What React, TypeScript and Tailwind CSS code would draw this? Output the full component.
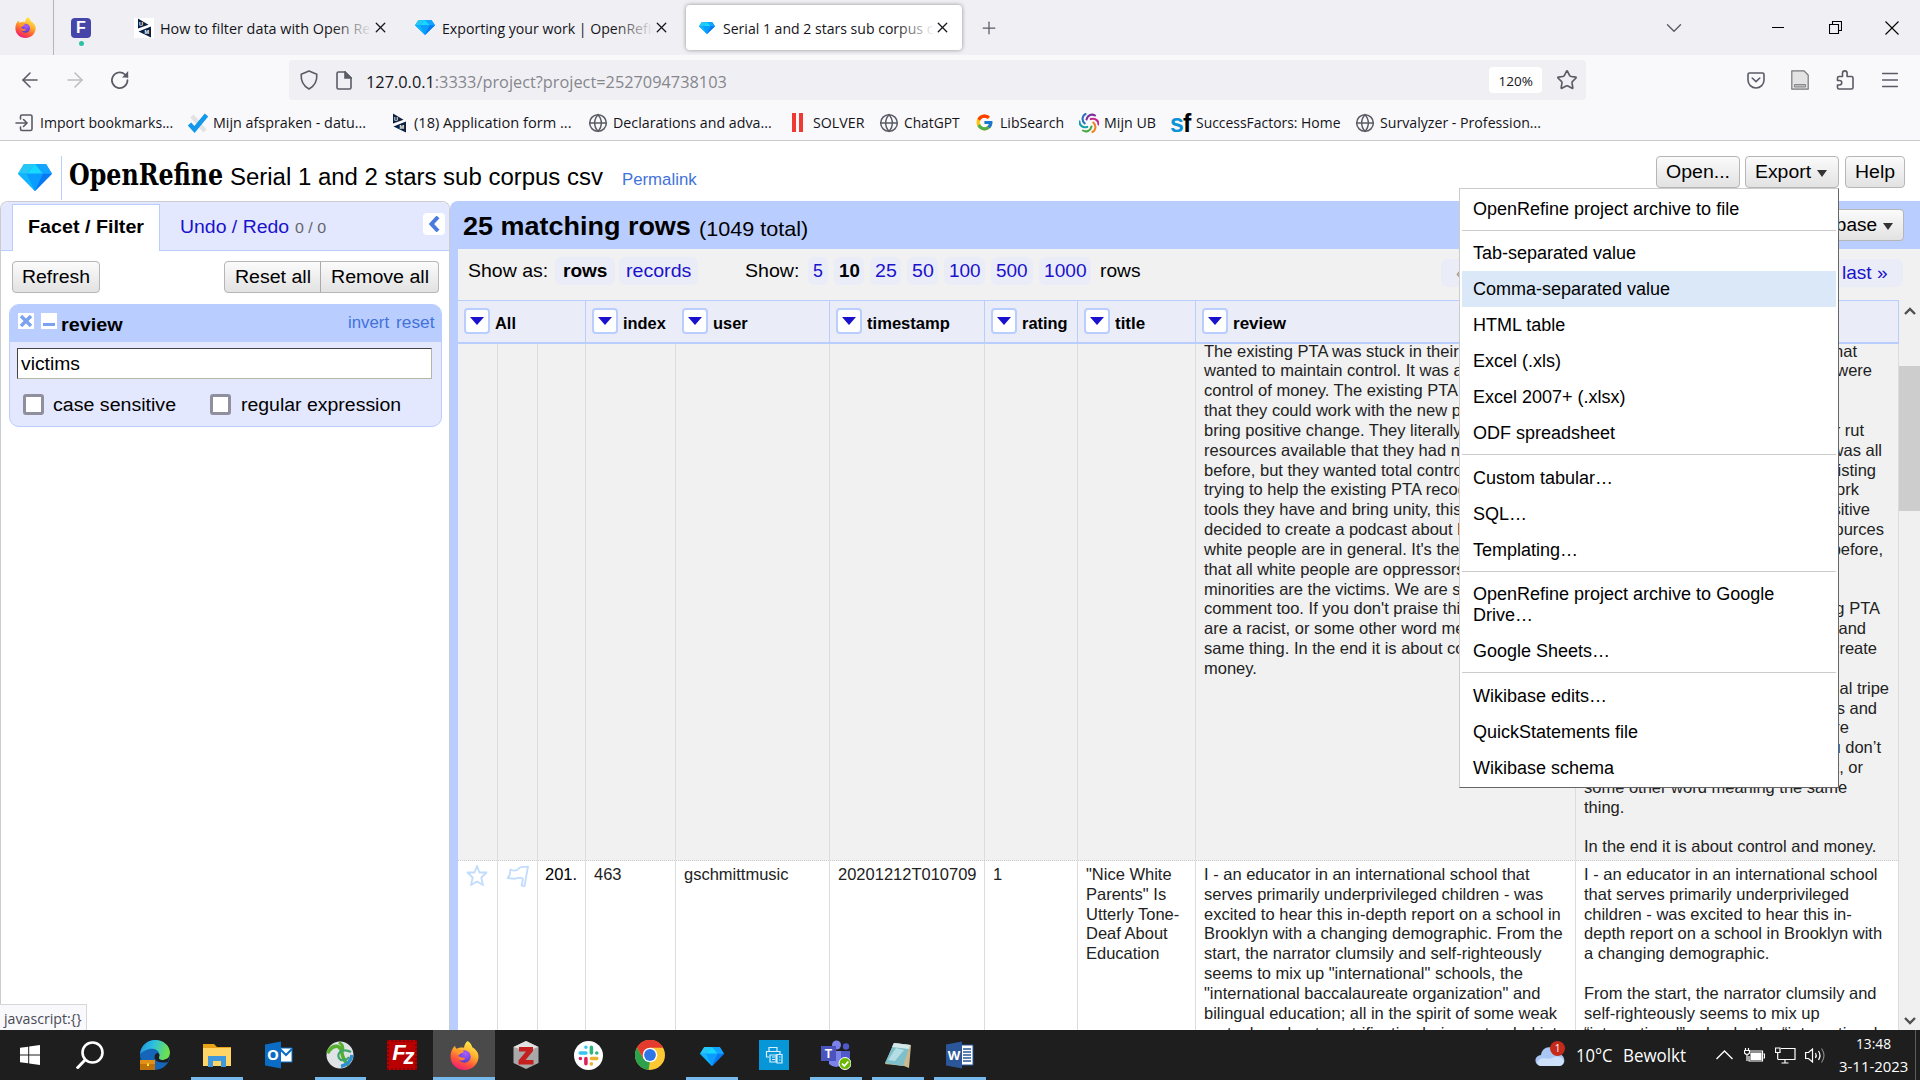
import React, { useLayoutEffect, useRef, useState } from "react";
import { Globe, Star, ArrowLeft, ArrowRight, X, Plus, ChevronDown, Menu as MenuIcon } from "lucide-react";
import { FcGoogle } from "react-icons/fc";

/* Single-line label condensed or widened horizontally to an exact width. */
function Fit({ w, className = "", children }: { w: number; className?: string; children: React.ReactNode }) {
  const ref = useRef<HTMLSpanElement>(null);
  const [scale, setScale] = useState(1);
  useLayoutEffect(() => {
    if (ref.current) setScale(w / ref.current.offsetWidth);
  }, [w]);
  return (
    <span className={"inline-block shrink-0 whitespace-nowrap " + className} style={{ width: w }}>
      <span ref={ref} className="inline-block origin-left" style={{ transform: `scaleX(${scale})` }}>
        {children}
      </span>
    </span>
  );
}

/* ---------- logos ---------- */

function Diamond({ className }: { className: string }) {
  return (
    <svg viewBox="0 0 34 28" preserveAspectRatio="none" className={className}>
      <path d="M6 0H28L34 10L17 28L0 10Z" fill="#0a95ff" />
      <path d="M6 0H17L9 10H0Z" fill="#26c6f5" />
      <path d="M17 0H28L34 10H25Z" fill="#12a4ff" />
      <path d="M17 0L25 10H9Z" fill="#17d9ff" />
      <path d="M0 10H9L17 28Z" fill="#10b5fb" />
      <path d="M9 10H25L17 28Z" fill="#0a9cff" />
      <path d="M25 10H34L17 28Z" fill="#0878f4" />
    </svg>
  );
}

function Firefox({ className }: { className: string }) {
  return (
    <svg viewBox="0 0 28 28" className={className}>
      <defs>
        <linearGradient id="ffOuter" x1="0.75" y1="0" x2="0.3" y2="1">
          <stop offset="0" stopColor="#fff14f" />
          <stop offset="0.4" stopColor="#ffb02e" />
          <stop offset="0.7" stopColor="#ff5a36" />
          <stop offset="1" stopColor="#f0187a" />
        </linearGradient>
        <radialGradient id="ffCore" cx="0.6" cy="0.25" r="0.8">
          <stop offset="0" stopColor="#b05cff" />
          <stop offset="1" stopColor="#4a3bd0" />
        </radialGradient>
      </defs>
      <path d="M17 0C20 2 21 4 21.500 6C25 8 28 11.500 27.500 16C27 23 21 28 14 28C6.500 28 0.500 22.500 0.500 15C0.500 10 2.500 6.500 5 4.500C5 6 5.500 7 6.500 7.500C9 6 12 6.200 13.500 6.500C13.800 4 15 1.500 17 0Z" fill="url(#ffOuter)" />
      <circle cx="14" cy="15" r="6" fill="url(#ffCore)" />
      <path d="M6 8C9 7.500 12 8.500 13.500 10.500C11.500 11.500 9.500 12 9 13.500C7.500 13 6 10.500 6 8Z" fill="#ff9a2b" />
      <path d="M8 14C10 16.500 13 15.500 15 17C13.500 19 10.500 19.500 8.300 17.500Z" fill="#ff7a35" />
    </svg>
  );
}

function UmLogo({ boxed = false }: { boxed?: boolean }) {
  return (
    <svg viewBox="0 0 20 20" className={boxed ? "size-5 bg-white" : "size-5"}>
      <path d="M4 0.500L14.500 6.800L4 10.500Z" fill="#0b1f41" />
      <path d="M17 8.500V19.500L4.500 13.500Z" fill="#0b1f41" />
      <text x="5" y="8" fontSize="5.500" fontWeight="700" fill="#fff" fontFamily="Liberation Sans, sans-serif">U</text>
      <text x="10.500" y="16" fontSize="5.500" fontWeight="700" fill="#fff" fontFamily="Liberation Sans, sans-serif">M</text>
    </svg>
  );
}

function CheckLogo() {
  return (
    <svg viewBox="0 0 20 20" className="size-5">
      <path d="M4 3L17 18" stroke="#e3e3e6" strokeWidth="4.500" />
      <path d="M1.500 11L6.500 16.500L18.500 2" fill="none" stroke="#1499ea" strokeWidth="4.600" />
    </svg>
  );
}

function ImportIcon() {
  return (
    <svg viewBox="0 0 20 20" fill="none" stroke="#5b5b66" strokeWidth="1.600" strokeLinecap="round" className="size-5">
      <path d="M5.500 6V3.500C5.500 2.500 6.200 2 7 2H15.500C16.500 2 17 2.600 17 3.500V16C17 17 16.500 17.500 15.500 17.500H7C6 17.500 5.500 17 5.500 16V14" />
      <path d="M1 10H12M8.500 6.500L12 10L8.500 13.500" />
    </svg>
  );
}

function Swirl() {
  const colors = ["#7a2f9b", "#c22a8e", "#f08122", "#49a942", "#12a0a8", "#2c6fc0"];
  return (
    <svg viewBox="-10 -10 20 20" className="size-5" fill="none" strokeWidth="2.100" strokeLinecap="round">
      {colors.map((c, i) => (
        <path key={c} d="M-2.500 -3.500C-1.500 -8 3 -9.500 6 -7.500" stroke={c} transform={`rotate(${i * 60})`} />
      ))}
    </svg>
  );
}

/* ---------- browser chrome ---------- */

function TabTitle({ children, w, active = false }: { children: React.ReactNode; w: number; active?: boolean }) {
  return (
    <div className="relative w-[212px] shrink-0 overflow-hidden text-[15px] leading-5 text-[#15141a]">
      <Fit w={w}>{children}</Fit>
      <div className={active ? "absolute inset-y-0 right-0 w-10 bg-linear-to-r from-transparent to-white" : "absolute inset-y-0 right-0 w-10 bg-linear-to-r from-transparent to-[#f0f0f4]"} />
    </div>
  );
}

function TabStrip() {
  return (
    <div className="flex h-[55px] items-center bg-[#f0f0f4]">
      <div className="flex h-full w-[54px] items-center border-r border-[#b4b4ba] pl-[15px]">
        <Firefox className="size-[21px]" />
      </div>
      <div className="ml-[17px] flex h-full w-5 flex-col items-center pt-[18px]">
        <div className="flex size-5 items-center justify-center rounded bg-[#4646a8] font-['Liberation_Sans',sans-serif] text-[16px] font-bold text-white">F</div>
        <div className="mt-[3px] size-[5px] rounded-full bg-[#2ac3a2]" />
      </div>
      <div className="ml-[43px] flex items-center">
        <UmLogo boxed />
        <div className="ml-[6px]"><TabTitle w={236}>How to filter data with Open Refine</TabTitle></div>
        <X className="size-[17px] text-[#15141a]" strokeWidth={1.8} />
      </div>
      <div className="ml-[26px] flex items-center">
        <Diamond className="h-[15px] w-5" />
        <div className="ml-[7px]"><TabTitle w={226}>Exporting your work | OpenRefine</TabTitle></div>
        <X className="-ml-px size-[17px] text-[#15141a]" strokeWidth={1.8} />
      </div>
      <div className="ml-[16px] flex h-[45px] w-[276px] items-center rounded bg-white pl-[13px] shadow-[0_0_4px_rgba(0,0,0,0.4)]">
        <Diamond className="h-3 w-4" />
        <div className="ml-[8px]"><TabTitle active w={224}>Serial 1 and 2 stars sub corpus csv</TabTitle></div>
        <X className="-ml-px size-[17px] text-[#15141a]" strokeWidth={1.8} />
      </div>
      <Plus className="ml-[17px] size-5 text-[#5b5b66]" strokeWidth={1.5} />
      <div className="ml-auto flex items-center">
        <ChevronDown className="size-[26px] text-[#5b5b66]" strokeWidth={1.3} />
        <div className="ml-[85px] h-px w-3 bg-black" />
        <svg viewBox="0 0 13 13" className="ml-[45px] size-[13px]" fill="none" stroke="#000" strokeWidth="1.100">
          <path d="M0.500 3.500H9.500V12.500H0.500ZM3.500 3.500V0.500H12.500V9.500H9.500" />
        </svg>
        <svg viewBox="0 0 14 14" className="ml-[43px] mr-[21px] size-[14px]" stroke="#000" strokeWidth="1.100">
          <path d="M0.500 0.500L13.500 13.500M13.500 0.500L0.500 13.500" />
        </svg>
      </div>
    </div>
  );
}

function Toolbar() {
  return (
    <div className="flex h-[50px] items-center bg-[#f9f9fb] text-[#5b5b66]">
      <ArrowLeft className="ml-[18px] size-6" strokeWidth={1.6} />
      <ArrowRight className="ml-[21px] size-6 text-[#bdbdc2]" strokeWidth={1.6} />
      <svg viewBox="0 0 20 20" className="ml-[23px] size-5" fill="none" stroke="#5b5b66" strokeWidth="1.700" strokeLinecap="round">
        <path d="M17.500 10A7.800 7.800 0 1 1 15 4.500L17.500 7" />
        <path d="M18.200 1V7.500H12Z" fill="#5b5b66" stroke="none" />
      </svg>
      <div className="ml-[159px] flex h-10 w-[1297px] items-center rounded bg-[#f0f0f4]">
        <svg viewBox="0 0 20 20" className="ml-[10px] size-5" fill="none" stroke="#5b5b66" strokeWidth="1.600">
          <path d="M10 1L17.800 4.200C18.200 10.500 15.500 16 10 19C4.500 16 1.800 10.500 2.200 4.200Z" strokeLinejoin="round" />
        </svg>
        <svg viewBox="0 0 16 19" className="ml-[17px] h-[19px] w-4" fill="none" stroke="#5b5b66" strokeWidth="1.600">
          <path d="M2.500 1H9L15 7V16.500Q15 18 13.500 18H2.500Q1 18 1 16.500V2.500Q1 1 2.500 1Z" />
          <path d="M9 1L15 7H9Z" fill="#5b5b66" />
        </svg>
        <span className="ml-[14px] pt-[3px] text-[16px] text-[#86868d]">
          <Fit w={361}><span className="text-[#15141a]">127.0.0.1</span>:3333/project?project=2527094738103</Fit>
        </span>
        <div className="ml-auto flex h-[26px] w-[53px] items-center justify-center rounded bg-white pt-0.5 text-[13.5px] text-[#15141a]"><Fit w={34}>120%</Fit></div>
        <Star className="ml-[14px] mr-2 size-[22px]" strokeWidth={1.8} />
      </div>
      <svg viewBox="0 0 18 17" className="ml-auto h-[17px] w-[18px]" fill="none" stroke="#5b5b66" strokeWidth="1.600" strokeLinecap="round">
        <path d="M2.500 1H15.500Q17 1 17 2.500V8C17 12.500 13.500 16 9 16C4.500 16 1 12.500 1 8V2.500Q1 1 2.500 1ZM5.200 6L9 9.600L12.800 6" />
      </svg>
      <svg viewBox="0 0 18 20" className="ml-[26px] h-5 w-[18px]" fill="#e3e3e3" stroke="#77777c" strokeWidth="1.200">
        <path d="M0.800 0.800H13L17.200 5V19.200H0.800Z" />
        <path d="M3.500 14.500H14.500V17H3.500Z" fill="#bbb" strokeWidth="0.800" />
      </svg>
      <svg viewBox="0 0 18 20" className="ml-[27px] h-5 w-[18px]" fill="none" stroke="#5b5b66" strokeWidth="1.600" strokeLinejoin="round">
        <path d="M6.500 6.500V3.200A2.300 2.300 0 0 1 11.100 3.200V6.500H15.500Q17 6.500 17 8V17.500Q17 19 15.500 19H3Q1.500 19 1.500 17.500V15H3.500A2.200 2.200 0 0 0 3.500 10.500H1.500V8Q1.500 6.500 3 6.500Z" />
      </svg>
      <MenuIcon className="ml-[25px] mr-[19px] size-[22px]" strokeWidth={1.7} />
    </div>
  );
}

const globe = <Globe className="size-5 text-[#5b5b66]" strokeWidth={1.8} />;

function Bookmark({ cls, icon, w, children }: { cls: string; icon: React.ReactNode; w: number; children: React.ReactNode }) {
  return (
    <div className={"flex shrink-0 items-center " + cls}>
      <span className="flex w-[25px] shrink-0">{icon}</span>
      <span className="pt-px"><Fit w={w}>{children}</Fit></span>
    </div>
  );
}

function Bookmarks() {
  return (
    <div className="flex h-9 items-center border-b border-[#cccccc] bg-[#f9f9fb] pl-[15px] text-[14.5px] leading-5 text-[#15141a]">
      <Bookmark cls="w-[173px]" icon={<ImportIcon />} w={133}>Import bookmarks...</Bookmark>
      <Bookmark cls="w-[201px]" icon={<CheckLogo />} w={153}>Mijn afspraken - datu...</Bookmark>
      <Bookmark cls="w-[199px]" icon={<UmLogo />} w={158}>(18) Application form ...</Bookmark>
      <Bookmark cls="w-[200px]" icon={globe} w={159}>Declarations and adva...</Bookmark>
      <Bookmark cls="w-[91px]" icon={<span className="flex gap-[3px] pl-1"><i className="h-[19px] w-1 bg-[#ee3a32]" /><i className="h-[19px] w-1 bg-[#ee3a32]" /></span>} w={51}>SOLVER</Bookmark>
      <Bookmark cls="w-[96px]" icon={globe} w={56}>ChatGPT</Bookmark>
      <Bookmark cls="w-[104px]" icon={<FcGoogle className="size-[19px]" />} w={64}>LibSearch</Bookmark>
      <Bookmark cls="w-[92px]" icon={<Swirl />} w={52}>Mijn UB</Bookmark>
      <Bookmark cls="w-[184px]" icon={<span className="-ml-px flex h-5 items-center font-['Liberation_Sans',sans-serif] text-[25px] font-bold leading-5 tracking-[-1px]"><span className="text-[#0a93d6]">s</span><span className="text-black">f</span></span>} w={144}>SuccessFactors: Home</Bookmark>
      <Bookmark cls="w-[190px]" icon={globe} w={161}>Survalyzer - Profession...</Bookmark>
    </div>
  );
}

/* ---------- OpenRefine ---------- */

const btn = "flex h-8 items-center border border-[#b6b6b6] bg-linear-to-b from-[#fbfbfb] to-[#e2e2e2] text-[18px] text-black";

function Caret({ cls }: { cls: string }) {
  return <span className={"mt-0.5 block size-0 border-x-[5.5px] border-t-[7px] border-x-transparent border-t-[#333] " + cls} />;
}

const menuGroups: string[][] = [
  ["OpenRefine project archive to file"],
  ["Tab-separated value", "Comma-separated value", "HTML table", "Excel (.xls)", "Excel 2007+ (.xlsx)", "ODF spreadsheet"],
  ["Custom tabular…", "SQL…", "Templating…"],
  ["OpenRefine project archive to Google Drive…", "Google Sheets…"],
  ["Wikibase edits…", "QuickStatements file", "Wikibase schema"],
];

function ExportMenu() {
  return (
    <div className="absolute right-[-1px] top-[31px] z-20 h-[600px] w-[380px] border border-b-[#666] border-l-[#ccc] border-r-[#666] border-t-[#ccc] bg-white p-0.5 text-[18px] leading-[21px] text-black">
      {menuGroups.map((group, g) => (
        <React.Fragment key={g}>
          {g > 0 && <div className={g > 1 ? "mb-[4.6px] mt-[3px] h-px bg-[#ccc]" : "mb-1 mt-[3px] h-px bg-[#ccc]"} />}
          {group.map((item) => (
            <div key={item} className={item === "Comma-separated value" ? "bg-[#dbe8f8] px-[11px] pb-[7px] pt-[8px]" : "px-[11px] pb-[7px] pt-[8px]"}>
              {item}
            </div>
          ))}
        </React.Fragment>
      ))}
    </div>
  );
}

function AppHeader() {
  return (
    <div className="flex h-[60px] items-start bg-white">
      <Diamond className="ml-[18px] mt-[23px] h-[27px] w-[34px]" />
      <div className="ml-[9px] mt-[15px] h-11 w-px bg-[#bacdff]" />
      <span className="ml-[7px] mt-[14px] font-['DejaVu_Serif',serif] text-[29px] font-bold leading-[40px] text-black"><Fit w={154}>OpenRefine</Fit></span>
      <span className="ml-[7px] mt-[16px] text-[23px] leading-[40px] text-black"><Fit w={373}>Serial 1 and 2 stars sub corpus csv</Fit></span>
      <span className="ml-[19px] mt-[19px] text-[16.8px] leading-[40px] text-[#4272db]"><Fit w={75}>Permalink</Fit></span>
      <div className="ml-auto mr-[15px] mt-[15px] flex">
        <div className={btn + " w-[84px] justify-center rounded"}><Fit w={64}>Open...</Fit></div>
        <div className={btn + " relative ml-[5px] w-[94px] rounded pl-[9px]"}>
          <Fit w={56}>Export</Fit>
          <Caret cls="ml-[6px]" />
          <ExportMenu />
        </div>
        <div className={btn + " ml-[6px] w-[60px] justify-center rounded"}><Fit w={40}>Help</Fit></div>
      </div>
    </div>
  );
}

function LeftPanel() {
  return (
    <div className="relative h-full w-[450px] shrink-0 rounded-t-lg border-l border-r border-t border-[#cbcbd2] bg-white">
      <div className="flex h-[49px] rounded-t-lg border-b border-[#bacdff] bg-[#e3e8ff]">
        <div className="ml-[11px] mt-0.5 h-[47px] w-[148px] border border-b-0 border-[#bacdff] bg-white pl-[15px] text-[18px] font-bold leading-[45px] text-black"><Fit w={116}>Facet / Filter</Fit></div>
        <div className="ml-[20px] mt-0.5 leading-[46px]">
          <span className="text-[18px] text-[#1a12cc]"><Fit w={109}>Undo / Redo</Fit></span>
          <span className="ml-[6px] text-[15.5px] text-[#666]"><Fit w={31}>0 / 0</Fit></span>
        </div>
        <div className="ml-auto mr-1 mt-[11px] flex h-[22px] w-[22px] items-center justify-center rounded bg-white">
          <svg viewBox="0 0 12 16" className="h-4 w-3" fill="none" stroke="#4a7ae0" strokeWidth="4"><path d="M10 1L3.500 8L10 15" /></svg>
        </div>
      </div>
      <div className="mt-[10px] flex px-[11px]">
        <div className={btn + " w-[88px] justify-center rounded"}><Fit w={68}>Refresh</Fit></div>
        <div className={btn + " ml-auto w-[97px] justify-center rounded-l"}><Fit w={76}>Reset all</Fit></div>
        <div className={btn + " -ml-px mr-[-1px] w-[119px] justify-center rounded-r border-l-[#aaa]"}><Fit w={98}>Remove all</Fit></div>
      </div>
      <div className="ml-2 mt-[11px] h-[123px] w-[433px] rounded-[10px] border border-[#bacdff] bg-[#e3e8ff]">
        <div className="flex h-[37px] items-start rounded-t-[8px] bg-[#bacdff] pl-2 pr-[7px]">
          <div className="mt-[8px] flex size-4 items-center justify-center bg-white">
            <svg viewBox="0 0 12 12" className="size-3" stroke="#7aa2ee" strokeWidth="3.400"><path d="M1 1L11 11M11 1L1 11" /></svg>
          </div>
          <div className="ml-[7px] mt-[8px] flex size-4 items-end bg-white px-0.5 pb-[3px]"><div className="h-[3px] w-full bg-[#7aa2ee]" /></div>
          <span className="ml-[4px] text-[18.5px] font-bold leading-[39px] text-black"><Fit w={62}>review</Fit></span>
          <span className="ml-auto text-[16.4px] leading-[35px] text-[#4272db]"><Fit w={41}>invert</Fit></span>
          <span className="ml-[7px] text-[16.4px] leading-[35px] text-[#4272db]"><Fit w={38}>reset</Fit></span>
        </div>
        <div className="ml-[7px] mt-[6px] h-[31px] w-[415px] border border-b-[#b5b5a8] border-l-[#444] border-r-[#b5b5a8] border-t-[#444] bg-white pl-[3px] text-[18px] leading-[30px] text-black"><Fit w={59}>victims</Fit></div>
        <div className="mt-[14px] flex items-center text-[18px] leading-[21px] text-black">
          <i className="ml-[13px] size-[21px] rounded-[3px] border-3 border-[#8f8f9d] bg-white" />
          <span className="ml-[9px] pt-0.5"><Fit w={123}>case sensitive</Fit></span>
          <i className="ml-[34px] size-[21px] rounded-[3px] border-3 border-[#8f8f9d] bg-white" />
          <span className="ml-[10px] pt-0.5"><Fit w={160}>regular expression</Fit></span>
        </div>
      </div>
      <div className="absolute bottom-0 left-[-1px] h-[26px] w-[87px] border-r border-t border-[#d7d7db] bg-[#f9f9fb] pl-[4px] font-['Open_Sans',sans-serif] text-[14px] leading-[27px] text-[#4a4a55]"><Fit w={77}>javascript:{"{}"}</Fit></div>
    </div>
  );
}

function Pill({ cls, w, bold = false, children }: { cls: string; w: number; bold?: boolean; children: React.ReactNode }) {
  return (
    <span className={"flex h-7 shrink-0 items-center justify-center rounded-md bg-[#eaecf8] " + cls + (bold ? " font-bold text-black" : " text-[#1a12cc]")}>
      <Fit w={w}>{children}</Fit>
    </span>
  );
}

function ViewControls() {
  return (
    <div className="flex h-[51px] items-start bg-[#f1f1f1] pl-[10px] pt-2 text-[17.8px] leading-7 text-black">
      <Fit w={80}>Show as:</Fit>
      <Pill cls="ml-[7px] w-[60px]" w={45} bold>rows</Pill>
      <Pill cls="ml-[4px] w-[79px]" w={65}>records</Pill>
      <span className="ml-[47px]"><Fit w={54}>Show:</Fit></span>
      <Pill cls="ml-[9px] w-5" w={10}>5</Pill>
      <Pill cls="ml-[6px] w-[30px]" w={21} bold>10</Pill>
      <Pill cls="ml-[6px] w-[31px]" w={22}>25</Pill>
      <Pill cls="ml-[6px] w-[31px]" w={22}>50</Pill>
      <Pill cls="ml-[6px] w-[41px]" w={32}>100</Pill>
      <Pill cls="ml-[6px] w-[42px]" w={32}>500</Pill>
      <Pill cls="ml-[6px] w-[52px]" w={43}>1000</Pill>
      <span className="ml-[9px]"><Fit w={41}>rows</Fit></span>
      <span className="ml-auto mr-[17px] mt-0.5 flex h-7 w-[462px] items-center justify-between rounded-md bg-[#eaecf8] pl-[15px] pr-[15px]">
        <span className="text-[#999]">«</span>
        <span className="text-[#1a12cc]"><Fit w={46}>last »</Fit></span>
      </span>
    </div>
  );
}

function HeadCell({ cls, label, w }: { cls: string; label: string; w: number }) {
  return (
    <div className={"flex shrink-0 items-start pt-[7px] " + cls}>
      <span className="flex h-[26px] w-[26px] shrink-0 items-center justify-center rounded border-2 border-[#bacdff] bg-white">
        <span className="size-0 border-x-[7px] border-t-[8px] border-x-transparent border-t-[#1a12cc]" />
      </span>
      <span className="ml-[5px] mt-0.5 text-[16.4px] font-bold leading-[27px] text-black"><Fit w={w}>{label}</Fit></span>
    </div>
  );
}

function TableHead() {
  return (
    <div className="flex h-[44px] border-b-2 border-t border-[#bacdff] bg-[#eaecf8]">
      <HeadCell cls="w-[128px] border-r border-[#bacdff] pl-[6px]" label="All" w={21} />
      <HeadCell cls="w-[90px] pl-[6px]" label="index" w={43} />
      <HeadCell cls="w-[154px] border-r border-[#bacdff] pl-[6px]" label="user" w={35} />
      <HeadCell cls="w-[155px] border-r border-[#bacdff] pl-[6px]" label="timestamp" w={83} />
      <HeadCell cls="w-[93px] border-r border-[#bacdff] pl-[6px]" label="rating" w={46} />
      <HeadCell cls="w-[118px] border-r border-[#bacdff] pl-[6px]" label="title" w={30} />
      <HeadCell cls="w-[380px] border-r border-[#bacdff] pl-[6px]" label="review" w={53} />
      <HeadCell cls="w-[323px] border-r border-[#bacdff] pl-[6px]" label="review 2" w={66} />
    </div>
  );
}

const grid = "grid grid-cols-[40px_40px_48px_90px_154px_155px_93px_118px_380px_323px]";
const cell = "border-r border-[#dcdcdc] pl-[8px] whitespace-nowrap overflow-hidden";

const firstReview = [
  "The existing PTA was stuck in their rut that",
  "wanted to maintain control. It was all were in",
  "control of money. The existing PTA felt",
  "that they could work with the new people and",
  "bring positive change. They literally had all",
  "resources available that they had never had",
  "before, but they wanted total control. By",
  "trying to help the existing PTA recognize the",
  "tools they have and bring unity, this person",
  "decided to create a podcast about how bad",
  "white people are in general. It's the usual tripe",
  "that all white people are oppressors and all",
  "minorities are the victims. We are sure you'll",
  "comment too. If you don't praise this, you",
  "are a racist, or some other word meaning the",
  "same thing. In the end it is about control and",
  "money.",
];

/* Lines of the last column with the width that each one ends at. */
const firstTranslated: [string, number][] = [
  ["stuck in their rut that", 273],
  ["control. It was all were", 288],
  ["", 0],
  ["", 0],
  ["was stuck in their rut", 280],
  ["control. It was all", 298],
  ["money. The existing", 292],
  ["that they could work", 275],
  ["and bring positive", 286],
  ["had all resources", 300],
  ["never had before,", 299],
  ["", 0],
  ["", 0],
  ["the existing PTA", 296],
  ["tools they have and", 282],
  ["decided to create", 293],
  ["", 0],
  ["the usual tripe", 305],
  ["are oppressors and", 293],
  ["minorities. We are", 265],
  ["too. If you don’t", 297],
  ["are a racist, or", 279],
  ["some other word meaning the same", 0],
  ["thing.", 0],
  ["", 0],
  ["In the end it is about control and money.", 0],
];

const secondReview = [
  "I - an educator in an international school that",
  "serves primarily underprivileged children - was",
  "excited to hear this in-depth report on a school in",
  "Brooklyn with a changing demographic. From the",
  "start, the narrator clumsily and self-righteously",
  "seems to mix up \"international\" schools, the",
  "\"international baccalaureate organization\" and",
  "bilingual education; all in the spirit of some weak",
  "metaphor about gentrification being extended into",
];

const secondTranslated = [
  "I - an educator in an international school",
  "that serves primarily underprivileged",
  "children - was excited to hear this in-",
  "depth report on a school in Brooklyn with",
  "a changing demographic.",
  "",
  "From the start, the narrator clumsily and",
  "self-righteously seems to mix up",
  "“international” schools, the “international",
];

function Lines({ lines }: { lines: string[] }) {
  return <>{lines.map((l, i) => <div key={i} className="h-[19.84px]">{l}</div>)}</>;
}

function TableBody() {
  return (
    <div className="h-[686px] overflow-hidden text-[16.5px] leading-[19.84px] text-[#222]">
      <div className={grid + " h-[517px] border-b border-dotted border-[#ccc] bg-[#f1f1f1]"}>
        {[0, 1, 2, 3, 4, 5, 6, 7].map((i) => <div key={i} className={cell} />)}
        <div className={cell}>
          <div className="mt-[-2.4px]"><Lines lines={firstReview} /></div>
        </div>
        <div className={cell}>
          <div className="mt-[-2.4px]">
            {firstTranslated.map(([l, w], i) =>
              w > 0 ? (
                <div key={i} className="flex h-[19.84px] justify-end" style={{ width: w }}>{l}</div>
              ) : (
                <div key={i} className="h-[19.84px]">{l}</div>
              )
            )}
          </div>
        </div>
      </div>
      <div className={grid + " h-[200px] bg-white [&>div]:pt-[4px]"}>
        <div className={cell}>
          <svg viewBox="0 0 22 22" className="size-[22px]" fill="#fff" stroke="#c3dcfb" strokeWidth="1.800" strokeLinejoin="round">
            <path d="M11 1L13.500 7.500H20.500L15.300 12.500L17 20L11 16.500L5 20L6.700 12.500L1.500 7.500H8.500Z" />
          </svg>
        </div>
        <div className={cell}>
          <svg viewBox="0 0 24 22" className="h-[22px] w-6" fill="#fff" stroke="#c3dcfb" strokeWidth="1.800" strokeLinejoin="round">
            <path d="M22 1.500L18.500 21L15.500 20.500L17 14C14 10.500 10 15 6.500 13.500L1.500 13C5 11 3.500 7 4.500 4.500C8 6.500 11 6 14 2.500C17 1 19 2.500 22 1.500Z" />
          </svg>
        </div>
        <div className={cell + " text-black !pl-[7px]"}>201.</div>
        <div className={cell}>463</div>
        <div className={cell}>gschmittmusic</div>
        <div className={cell}>20201212T010709</div>
        <div className={cell}>1</div>
        <div className={cell}><Lines lines={["\"Nice White", "Parents\" Is", "Utterly Tone-", "Deaf About", "Education"]} /></div>
        <div className={cell}><Lines lines={secondReview} /></div>
        <div className={cell}><Lines lines={secondTranslated} /></div>
      </div>
    </div>
  );
}

function Chevron({ down = false }: { down?: boolean }) {
  return (
    <svg viewBox="0 0 12 8" className={down ? "h-2 w-3 rotate-180" : "h-2 w-3"} fill="none" stroke="#505050" strokeWidth="2.400"><path d="M1 7L6 2L11 7" /></svg>
  );
}

function RightPanel() {
  return (
    <div className="h-full flex-1 rounded-tl-lg bg-[#bacdff] pl-[8px]">
      <div className="flex h-12 items-center pl-[5px] text-black">
        <span className="mt-1 text-[26.500px] font-bold"><Fit w={228}>25 matching rows</Fit></span>
        <span className="ml-[8px] mt-[7px] text-[21px]"><Fit w={109}>(1049 total)</Fit></span>
        <div className={btn + " ml-auto mr-4 w-[120px] rounded pl-[15px]"}>
          <Fit w={77}>Wikibase</Fit>
          <Caret cls="ml-[6px]" />
        </div>
      </div>
      <ViewControls />
      <div className="flex">
        <div className="w-[1441px] shrink-0">
          <TableHead />
          <TableBody />
        </div>
        <div className="flex w-[21px] flex-col items-center bg-[#f0f0f0] pt-[7px]">
          <Chevron />
          <div className="mt-[51px] h-[145px] w-full bg-[#cdcdcd]" />
          <span className="mb-[5px] mt-auto"><Chevron down /></span>
        </div>
      </div>
    </div>
  );
}

/* ---------- taskbar ---------- */

function TaskItem({ children, open = false, active = false }: { children: React.ReactNode; open?: boolean; active?: boolean }) {
  return (
    <div className={active ? "relative flex h-full w-[61.92px] items-center justify-center bg-[#4a4a4a]" : "relative flex h-full w-[61.92px] items-center justify-center"}>
      {children}
      {(open || active) && <div className={active ? "absolute inset-x-0 bottom-0 h-[3px] bg-[#76b9ed]" : "absolute inset-x-[5px] bottom-0 h-[3px] bg-[#76b9ed]"} />}
    </div>
  );
}

function OfficeTile({ letter, color }: { letter: string; color: string }) {
  const word = letter === "W";
  return (
    <svg viewBox="0 0 28 28" className="size-7">
      <path d={word ? "M15 4H27V24H15Z" : "M15 7H27V21H15Z"} fill="#fff" stroke={color} />
      {word ? <path d="M17 8H25M17 11H25M17 14H25M17 17H25M17 20H25" stroke={color} strokeWidth="1.500" /> : <path d="M15 8L21 14L27 8" fill="none" stroke={color} strokeWidth="2" />}
      <path d="M0 3.500L16 0.500V27.500L0 24.500Z" fill={color} />
      <text x="8" y="19" textAnchor="middle" fontSize={word ? 13 : 15} fontWeight="700" fill="#fff" fontFamily="Open Sans, sans-serif">{letter}</text>
    </svg>
  );
}

function Taskbar() {
  return (
    <div className="flex h-[50px] items-center bg-[#1e1e1e] text-white">
      <div className="flex h-full">
        <TaskItem>
          <svg viewBox="0 0 20 20" className="-ml-0.5 size-5" fill="#fff"><path d="M0 2.800L8.200 1.700V9.500H0ZM9.200 1.500L20 0V9.500H9.200ZM0 10.500H8.200V18.300L0 17.200ZM9.200 10.500H20V20L9.200 18.500Z" /></svg>
        </TaskItem>
        <TaskItem>
          <svg viewBox="0 0 28 28" className="-ml-1.5 size-7" fill="none" stroke="#fff" strokeWidth="2.600"><circle cx="16.500" cy="11.500" r="10" /><path d="M9.500 18.500L0.800 27.500" strokeWidth="3" /></svg>
        </TaskItem>
        <TaskItem>
          <svg viewBox="0 0 30 30" className="size-[30px]">
            <defs>
              <linearGradient id="edgeG" x1="0" y1="0" x2="1" y2="0.2"><stop offset="0" stopColor="#1c8fe0" /><stop offset="0.5" stopColor="#2fc3dd" /><stop offset="1" stopColor="#6fe04b" /></linearGradient>
            </defs>
            <circle cx="15" cy="15" r="15" fill="#1565b8" />
            <path d="M0 14C1 5 8 0 15 0C24 0 30 6 30 13C30 18 26 20 22 20C18 20 19 17 19.500 15C19 9 13 8 9 9C5 10 2 12 0 14Z" fill="url(#edgeG)" />
            <path d="M15 15C13 20 18 24 28 22L30 16L30 13C30 18 26 20 22 20C18 20 19 17 19.500 15C18 12 16 13 15 15Z" fill="#1e1e1e" />
            <path d="M0 20H15V30H0Z" fill="#c0720a" /><path d="M0 20H15V24H0Z" fill="#e09016" /><path d="M7 23.500H9V26H7Z" fill="#ffe14a" />
          </svg>
        </TaskItem>
        <TaskItem open>
          <svg viewBox="0 0 28 24" className="h-6 w-7">
            <path d="M0 1H11L14 4H28V22H0Z" fill="#e8a317" /><path d="M0 5H28V23H0Z" fill="#ffd565" />
            <path d="M5 13H23V24H18V18H10V24H5Z" fill="#3f97dc" />
          </svg>
        </TaskItem>
        <TaskItem><OfficeTile letter="O" color="#0a6cc4" /></TaskItem>
        <TaskItem open>
          <svg viewBox="0 0 28 28" className="size-7">
            <circle cx="14" cy="14" r="13.500" fill="#dfe3e6" />
            <path d="M1.500 12C6 4 13 3 15.500 10C16.500 17 19 21 22.500 24" fill="none" stroke="#55ae2e" strokeWidth="3.600" />
            <path d="M13 1.500C16 3 17.500 5 16.500 9" fill="none" stroke="#55ae2e" strokeWidth="3" />
            <path d="M25 11C18 7 10 11 13 17C15 21 21 19 23 16" fill="none" stroke="#3fa46a" strokeWidth="2.200" />
            <path d="M15 25.500C21 24 25 20 26 14" fill="none" stroke="#2b8fd0" strokeWidth="3.400" />
          </svg>
        </TaskItem>
        <TaskItem>
          <div className="flex size-[30px] items-center justify-center border-2 border-dotted border-[#8b0000] bg-[#b90000] font-['Liberation_Sans',sans-serif] text-[22px] font-bold italic leading-none tracking-[-2px]"><span className="-mt-1">F</span><span className="mt-1">z</span></div>
        </TaskItem>
        <TaskItem active><Firefox className="size-[29px]" /></TaskItem>
        <TaskItem>
          <svg viewBox="0 0 26 28" className="h-7 w-[26px]">
            <path d="M13 0L25.500 6V22L13 28L0.500 22V6Z" fill="#a9a9a9" /><path d="M13 0L25.500 6L13 10L0.500 6Z" fill="#e2e2e2" />
            <path d="M6 6H20V10L12.500 19H20.500V23.500H5.500V19.500L13 10.500H6Z" fill="#c3201f" />
          </svg>
        </TaskItem>
        <TaskItem>
          <svg viewBox="0 0 28 28" className="size-[29px]" strokeWidth="3.400" strokeLinecap="round">
            <circle cx="14" cy="14" r="14" fill="#fff" />
            <path d="M6 11.500H11.500M11.500 6V6.100" stroke="#36c5f0" /><path d="M16.800 6V11.500M22 11.500V11.600" stroke="#2eb67d" />
            <path d="M16.800 16.800H22M16.800 22V22.100" stroke="#ecb22e" /><path d="M11.500 16.800V22M6.200 16.800V16.900" stroke="#e01e5a" />
          </svg>
        </TaskItem>
        <TaskItem>
          <svg viewBox="0 0 30 30" className="size-[30px]">
            <circle cx="15" cy="15" r="15" fill="#fcc934" />
            <path d="M15 15L2 7.500A15 15 0 0 1 28 7.500H15Z" fill="#e33b2e" />
            <path d="M2 7.500L8.500 18.700L15 21.500L13.500 30A15 15 0 0 1 2 7.500Z" fill="#2da14c" />
            <path d="M2 7.500A15 15 0 0 1 28 7.500H15L9 12L8.500 18.700Z" fill="#e33b2e" />
            <circle cx="15" cy="15" r="7.300" fill="#fff" /><circle cx="15" cy="15" r="5.900" fill="#2f75e8" />
          </svg>
        </TaskItem>
        <TaskItem open><Diamond className="mt-[3px] h-[19px] w-6" /></TaskItem>
        <TaskItem>
          <div className="flex size-[30px] items-center justify-center bg-[#0796d8]">
            <svg viewBox="0 0 18 18" className="size-[18px]" fill="none" stroke="#d9f0fb" strokeWidth="1.200"><path d="M4 5V1.500H12V5M4 11H1.500V5.500H15V8M5 9H11V16H5ZM7 11H10M7 13.500H10M12 8.500H17V17H12ZM14 11H15.500M14 14H15.500" /></svg>
          </div>
        </TaskItem>
        <TaskItem open>
          <svg viewBox="0 0 30 30" className="size-[30px]">
            <circle cx="15.500" cy="5" r="4.500" fill="#7b83eb" /><circle cx="25" cy="6.500" r="3.200" fill="#5059c9" />
            <path d="M8 11H22V24Q15 30 8 24Z" fill="#7b83eb" /><path d="M20 11H29V20Q26 24 20 22Z" fill="#5059c9" />
            <path d="M0 6H15V21H0Z" fill="#4b53bc" />
            <text x="7.500" y="18" textAnchor="middle" fontSize="12" fontWeight="700" fill="#fff" fontFamily="Liberation Sans, sans-serif">T</text>
            <circle cx="24" cy="23.500" r="6" fill="#6bb700" stroke="#fff" /><path d="M21 23.500L23.300 26L27.300 21.500" fill="none" stroke="#fff" strokeWidth="1.800" />
          </svg>
        </TaskItem>
        <TaskItem open>
          <svg viewBox="0 0 28 28" className="size-7">
            <path d="M10 2L27 4L25 27L20 25L1 23Z" fill="#c9b98d" /><path d="M10 2L26 4L19 25L1 22Z" fill="#7fbfcb" /><path d="M10 2L26 4L25 8L8 6Z" fill="#d6e7ea" /><path d="M12 7L20 9L11 20L4 19Z" fill="#b4dde4" />
          </svg>
        </TaskItem>
        <TaskItem open><OfficeTile letter="W" color="#2b579a" /></TaskItem>
      </div>
      <div className="ml-auto flex h-full items-center">
        <svg viewBox="0 0 31 26" className="mb-[3px] h-[26px] w-[31px]">
          <path d="M7 25C-1 25 -2 15 6 14C7 5 18 3 20 12C30 11 33 24 24 25Z" fill="#a9c7f5" />
          <path d="M7 25C2 25 1 21 4 19C9 15 14 20 19 16C24 14 31 18 28 23Q27 25 24 25Z" fill="#cfe0fb" />
          <circle cx="22.500" cy="7.500" r="7.500" fill="#c42b1c" />
          <text x="22.500" y="11.200" textAnchor="middle" fontSize="10" fill="#fff" fontFamily="Open Sans, sans-serif">1</text>
        </svg>
        <span className="ml-[10px] text-[17.500px]"><Fit w={37}>10°C</Fit></span>
        <span className="ml-[10px] text-[17.500px]"><Fit w={63}>Bewolkt</Fit></span>
        <svg viewBox="0 0 17 10" className="ml-[30px] h-[10px] w-[17px]" fill="none" stroke="#fff" strokeWidth="1.400"><path d="M0.500 9L8.500 1L16.500 9" /></svg>
        <svg viewBox="0 0 21 15" className="ml-[11px] h-[15px] w-[21px]" fill="none" stroke="#fff" strokeWidth="1.200"><path d="M6 3H18.500V13H5V8M19.500 6H20.500V10H19.500M0.500 2.500H5.500V5Q3 8 0.500 5ZM1.500 0V2M4.500 0V2M3 7V13" /><path d="M7 5H17V11.500H7Z" fill="#fff" /></svg>
        <svg viewBox="0 0 21 17" className="ml-[10px] h-[17px] w-[21px]" fill="none" stroke="#fff" strokeWidth="1.200"><path d="M6 1.500H20V12.500H3M10 12.500V16M6.500 16H13.500M0.500 1H5V5.500H0.500ZM2.700 5.500V12.500" /></svg>
        <svg viewBox="0 0 22 17" className="ml-[9px] h-[17px] w-[22px]" fill="none" stroke="#fff" strokeWidth="1.200"><path d="M0.600 5.500H3.500L7.500 2V15L3.500 11.500H0.600ZM10.500 6Q12 8.500 10.500 11M13.500 4Q16.500 8.500 13.500 13" /><path d="M16.500 1.500Q21.500 8.500 16.500 15.500" stroke="#888" /></svg>
        <div className="ml-[11px] flex w-[70px] flex-col items-center text-[14.500px] leading-[23px]">
          <Fit w={35}>13:48</Fit>
          <Fit w={69}>3-11-2023</Fit>
        </div>
        <div className="ml-[7px] mr-1 h-full w-px bg-[#5c5c5c]" />
      </div>
    </div>
  );
}

export default function App() {
  return (
    <div className="flex h-[1080px] w-[1920px] flex-col overflow-hidden bg-white font-['Liberation_Sans',Arial,sans-serif]">
      <div className="font-['Open_Sans',sans-serif]">
        <TabStrip />
        <Toolbar />
        <Bookmarks />
      </div>
      <AppHeader />
      <div className="flex h-[829px]">
        <LeftPanel />
        <RightPanel />
      </div>
      <div className="font-['Open_Sans',sans-serif]">
        <Taskbar />
      </div>
    </div>
  );
}
